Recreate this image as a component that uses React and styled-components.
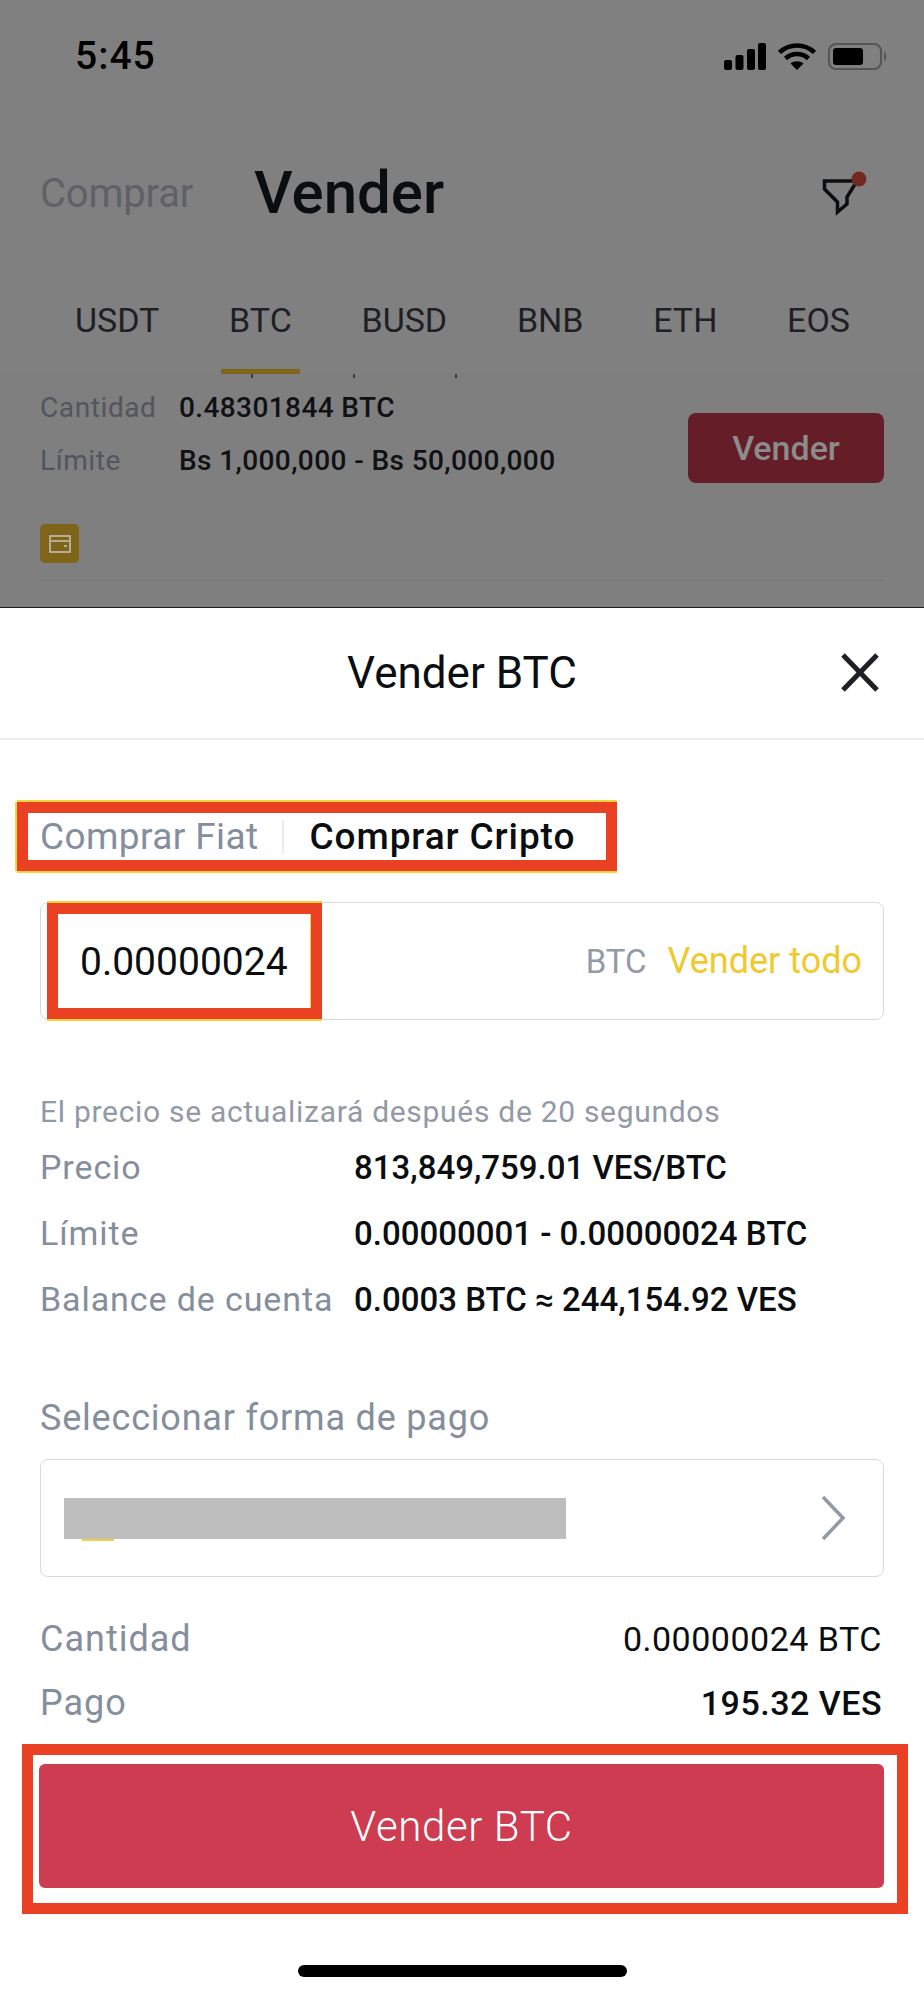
import React from 'react';
import styled, { createGlobalStyle } from 'styled-components';

const GlobalStyle = createGlobalStyle`
    html, body {
        margin: 0;
        padding: 0;
        background: #fff;
    }
    * {
        box-sizing: border-box;
    }
`;

const Screen = styled.div`
    width: 924px;
    height: 1999px;
    overflow: hidden;
    display: flex;
    flex-direction: column;
    font-family: Roboto, "Liberation Sans", sans-serif;
    color: #0b0e11;
`;

const Backdrop = styled.div`
    height: 608px;
    flex-shrink: 0;
    background: #808080;
    border-bottom: 1px solid #1e2026;
    display: flex;
    flex-direction: column;
    overflow: hidden;
`;

const StatusBar = styled.div`
    height: 94px;
    padding: 37px 36px 0 75px;
    display: flex;
    justify-content: space-between;
    align-items: flex-start;
`;

const Clock = styled.span`
    font-size: 39px;
    line-height: 39px;
    letter-spacing: 1px;
    font-weight: 500;
    color: #000;
`;

const StatusIcons = styled.div`
    display: flex;
    gap: 12px;
    margin-top: 6px;
`;

const Header = styled.div`
    height: 196px;
    padding: 0 56px 0 40px;
    display: flex;
    align-items: center;
`;

const SideTitle = styled.span`
    margin-top: 3px;
    font-size: 40px;
    letter-spacing: -.2px;
    color: #5f6166;
`;

const MainTitle = styled.span`
    margin: 1px 0 0 61px;
    font-size: 60px;
    font-weight: 500;
    color: #0b0e11;
`;

const FilterIcon = styled.svg`
    margin-left: auto;
    margin-top: 2px;
`;

const CoinTabs = styled.div`
    height: 84px;
    padding: 0 74px 0 75px;
    display: flex;
    justify-content: space-between;
    align-items: flex-end;
`;

const CoinTab = styled.div`
    margin: 0 -8px;
    padding: 0 8px 29px;
    font-size: 34px;
    line-height: 40px;
    color: #1e2026;
    border-bottom: 5px solid ${p => (p.$active ? '#7f6519' : 'transparent')};
`;

const ListArea = styled.div`
    flex: 1;
    padding: 0 40px;
    background: #7f7f7f;
`;

const ClippedTicks = styled.div`
    height: 4px;
    padding-left: 211px;
    display: flex;
    gap: 100px;
`;

const Tick = styled.i`
    width: 2px;
    height: 4px;
    background: #3c3c3c;
`;

const OfferRow = styled.div`
    margin-top: 14px;
    display: flex;
    justify-content: space-between;
    align-items: flex-start;
`;

const OfferInfo = styled.div`
    display: flex;
    flex-direction: column;
    gap: 21px;
`;

const OfferLine = styled.div`
    display: flex;
    font-size: 28px;
    line-height: 32px;
`;

const OfferLabel = styled.span`
    width: 139px;
    letter-spacing: .6px;
    color: #50555f;
`;

const OfferValue = styled.span`
    font-weight: 500;
    letter-spacing: .4px;
    color: #0f1114;
`;

const OfferButton = styled.div`
    width: 196px;
    height: 70px;
    margin-top: 21px;
    border-radius: 8px;
    background: #651d27;
    color: #8c8c8c;
    font-size: 34px;
    font-weight: 500;
    display: flex;
    align-items: center;
    justify-content: center;
`;

const WalletBadge = styled.div`
    width: 39px;
    height: 39px;
    margin-top: 41px;
    border-radius: 5px;
    background: #7f6519;
    display: flex;
    align-items: center;
    justify-content: center;
`;

const ListDivider = styled.div`
    height: 1px;
    margin-top: 17px;
    background: #777;
`;

const Sheet = styled.div`
    flex: 1;
    background: #fff;
    display: flex;
    flex-direction: column;
`;

const SheetHeader = styled.div`
    height: 132px;
    border-bottom: 2px solid #eaecef;
    display: flex;
    align-items: center;
    justify-content: center;
    position: relative;
`;

const SheetTitle = styled.h2`
    margin: 0;
    font-size: 44px;
    font-weight: 400;
    color: #0b0e11;
`;

const CloseIcon = styled.svg`
    position: absolute;
    right: 45px;
    top: 45px;
`;

const Highlight = styled.div`
    border: 11px solid #ea4125;
    background: #fff;
`;

const ModeTabs = styled(Highlight)`
    width: 600px;
    height: 69px;
    margin: 62px 0 0 17px;
    padding-left: 12px;
    display: flex;
    align-items: center;
    font-size: 37px;
    letter-spacing: .5px;
    box-shadow: 0 -2px 0 #f8d33a, 0 2px 0 #f8d33a, -2px 0 0 #f8d33a;
`;

const ModeTab = styled.span`
    color: ${p => (p.$active ? '#0b0e11' : '#848e9c')};
    font-weight: ${p => (p.$active ? 500 : 400)};
    letter-spacing: ${p => (p.$active ? '.9px' : '.4px')};
`;

const ModeDivider = styled.i`
    width: 2px;
    height: 34px;
    margin: 0 26px 0 23px;
    background: #eaecef;
`;

const Field = styled.div`
    height: 118px;
    margin: 31px 40px 0;
    border: 1px solid #d8dae0;
    border-radius: 8px;
    padding: 0 21px 0 39px;
    display: flex;
    align-items: center;
    position: relative;
`;

const AmountBox = styled(Highlight)`
    position: absolute;
    left: 6px;
    top: 0;
    width: 275px;
    height: 116px;
    display: flex;
    align-items: center;
    padding: 2px 0 0 22px;
    font-size: 39px;
    color: #0b0e11;
    box-shadow: 0 -2px 0 #f8d33a, 0 2px 0 #f8d33a, inset -1px 0 0 #f8d33a;
`;

const Unit = styled.span`
    margin-left: auto;
    font-size: 33px;
    color: #929aa5;
`;

const SellAll = styled.span`
    margin-left: 21px;
    font-size: 36px;
    color: #f0c92e;
`;

const Hint = styled.p`
    margin: 75px 40px 0;
    font-size: 30px;
    line-height: 34px;
    letter-spacing: .7px;
    color: #929aa5;
`;

const Details = styled.div`
    margin: 18px 40px 0;
    display: flex;
    flex-direction: column;
    gap: 26px;
`;

const DetailRow = styled.div`
    display: flex;
    align-items: center;
    height: 40px;
`;

const DetailLabel = styled.span`
    width: 314px;
    font-size: 34px;
    letter-spacing: .9px;
    white-space: nowrap;
    color: #848e9c;
`;

const DetailValue = styled.span`
    font-size: 33px;
    font-weight: 500;
    color: #0b0e11;
`;

const PayLabel = styled.div`
    margin: 79px 40px 0;
    font-size: 36px;
    line-height: 40px;
    letter-spacing: .8px;
    color: #848e9c;
`;

const PaySelect = styled.div`
    height: 118px;
    margin: 21px 40px 0;
    border: 1px solid #d8dae0;
    border-radius: 8px;
    padding: 0 38px 0 23px;
    display: flex;
    align-items: center;
    justify-content: space-between;
`;

const RedactedBlock = styled.div`
    width: 502px;
    height: 41px;
    background: #bebebe;
    position: relative;

    &::after {
        content: '';
        position: absolute;
        left: 18px;
        bottom: -2px;
        width: 32px;
        height: 2px;
        background: #f0d040;
    }
`;

const Summary = styled.div`
    margin: 42px 40px 0;
    display: flex;
    flex-direction: column;
    gap: 24px;
`;

const SummaryRow = styled.div`
    height: 40px;
    display: flex;
    align-items: center;
    justify-content: space-between;
`;

const SummaryLabel = styled.span`
    font-size: 36px;
    letter-spacing: 1px;
    color: #848e9c;
`;

const SummaryValue = styled.span`
    font-size: 34px;
    letter-spacing: .5px;
    font-weight: ${p => (p.$strong ? 500 : 400)};
    color: #0b0e11;
    padding-right: 2px;
`;

const ButtonFrame = styled(Highlight)`
    height: 170px;
    margin: 21px 16px 0 22px;
    padding: 9px 13px 0 6px;
`;

const SellButton = styled.button`
    width: 100%;
    height: 124px;
    border: 0;
    border-radius: 6px;
    background: #cd3c50;
    color: #fff;
    font-family: inherit;
    font-size: 42px;
    font-weight: 300;
    letter-spacing: .6px;
    display: block;
`;

const HomeBar = styled.div`
    width: 329px;
    height: 12px;
    margin: 51px auto 0;
    border-radius: 6px;
    background: #000;
`;

const offers = [
    { label: 'Cantidad', value: '0.48301844 BTC' },
    { label: 'Límite', value: 'Bs 1,000,000 - Bs 50,000,000' },
];

const details = [
    { label: 'Precio', value: '813,849,759.01 VES/BTC' },
    { label: 'Límite', value: '0.00000001 - 0.00000024 BTC' },
    { label: 'Balance de cuenta', value: '0.0003 BTC ≈ 244,154.92 VES' },
];

const coins = ['USDT', 'BTC', 'BUSD', 'BNB', 'ETH', 'EOS'];

function App() {
    return (
        <Screen>
            <GlobalStyle />
            <Backdrop>
                <StatusBar>
                    <Clock>5:45</Clock>
                    <StatusIcons>
                        <svg width="42" height="27" viewBox="0 0 42 27" fill="#000">
                            <rect x="0" y="17" width="8" height="10" rx="2" />
                            <rect x="11.5" y="12" width="8" height="15" rx="2" />
                            <rect x="23" y="6" width="8" height="21" rx="2" />
                            <rect x="34" y="0" width="8" height="27" rx="2" />
                        </svg>
                        <svg width="38" height="27" viewBox="0 0 38 27" fill="none" stroke="#000" strokeWidth="4.5">
                            <path d="M1.5 9.5C11 0 27 0 36.5 9.5" />
                            <path d="M7.5 15.5C14 9.5 24 9.5 30.5 15.5" />
                            <path d="M19 27L12.5 20.5C16 17.5 22 17.5 25.5 20.5Z" fill="#000" stroke="none" />
                        </svg>
                        <svg width="60" height="27" viewBox="0 0 60 27">
                            <rect x="1" y="1" width="52" height="25" rx="7" fill="none" stroke="#555" strokeWidth="2" />
                            <rect x="5" y="5" width="30" height="17" rx="3" fill="#000" />
                            <path d="M56 9C59 10 59 17 56 18Z" fill="#555" />
                        </svg>
                    </StatusIcons>
                </StatusBar>
                <Header>
                    <SideTitle>Comprar</SideTitle>
                    <MainTitle>Vender</MainTitle>
                    <FilterIcon width="46" height="46" viewBox="0 0 46 46" fill="none">
                        <path d="M2.5 11H35L25 27V34L15.5 42V32L2.5 19Z" stroke="#0b0e11" strokeWidth="3.5" />
                        <circle cx="37" cy="9" r="7.5" fill="#722a20" />
                    </FilterIcon>
                </Header>
                <CoinTabs>
                    {coins.map(coin => (
                        <CoinTab key={coin} $active={coin === 'BTC'}>{coin}</CoinTab>
                    ))}
                </CoinTabs>
                <ListArea>
                    <ClippedTicks>
                        <Tick />
                        <Tick />
                        <Tick />
                    </ClippedTicks>
                    <OfferRow>
                        <OfferInfo>
                            {offers.map(row => (
                                <OfferLine key={row.label}>
                                    <OfferLabel>{row.label}</OfferLabel>
                                    <OfferValue>{row.value}</OfferValue>
                                </OfferLine>
                            ))}
                        </OfferInfo>
                        <OfferButton>Vender</OfferButton>
                    </OfferRow>
                    <WalletBadge>
                        <svg width="22" height="18" viewBox="0 0 22 18" fill="none" stroke="#b5ad96" strokeWidth="2">
                            <rect x="1" y="1" width="20" height="16" />
                            <path d="M1 6H21" />
                            <path d="M15 11H18" />
                        </svg>
                    </WalletBadge>
                    <ListDivider />
                </ListArea>
            </Backdrop>
            <Sheet>
                <SheetHeader>
                    <SheetTitle>Vender BTC</SheetTitle>
                    <CloseIcon width="38" height="39" viewBox="0 0 38 39" stroke="#1e2026" strokeWidth="5" fill="none">
                        <path d="M2 2L36 37" />
                        <path d="M36 2L2 37" />
                    </CloseIcon>
                </SheetHeader>
                <ModeTabs>
                    <ModeTab>Comprar Fiat</ModeTab>
                    <ModeDivider />
                    <ModeTab $active>Comprar Cripto</ModeTab>
                </ModeTabs>
                <Field>
                    <AmountBox>0.00000024</AmountBox>
                    <Unit>BTC</Unit>
                    <SellAll>Vender todo</SellAll>
                </Field>
                <Hint>El precio se actualizará después de 20 segundos</Hint>
                <Details>
                    {details.map(row => (
                        <DetailRow key={row.label}>
                            <DetailLabel>{row.label}</DetailLabel>
                            <DetailValue>{row.value}</DetailValue>
                        </DetailRow>
                    ))}
                </Details>
                <PayLabel>Seleccionar forma de pago</PayLabel>
                <PaySelect>
                    <RedactedBlock />
                    <svg width="24" height="44" viewBox="0 0 24 44" fill="none" stroke="#929aa5" strokeWidth="3.5">
                        <path d="M2 1L22 22L2 43" />
                    </svg>
                </PaySelect>
                <Summary>
                    <SummaryRow>
                        <SummaryLabel>Cantidad</SummaryLabel>
                        <SummaryValue>0.00000024 BTC</SummaryValue>
                    </SummaryRow>
                    <SummaryRow>
                        <SummaryLabel>Pago</SummaryLabel>
                        <SummaryValue $strong>195.32 VES</SummaryValue>
                    </SummaryRow>
                </Summary>
                <ButtonFrame>
                    <SellButton>Vender BTC</SellButton>
                </ButtonFrame>
                <HomeBar />
            </Sheet>
        </Screen>
    );
}

export default App;
